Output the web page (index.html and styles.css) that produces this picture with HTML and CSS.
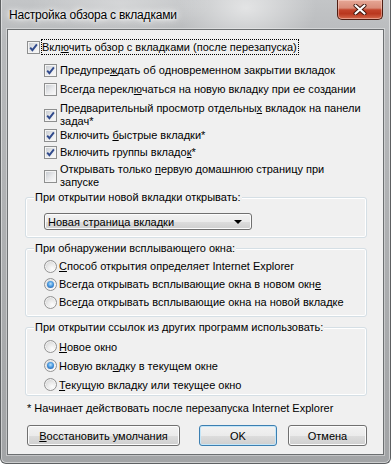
FILE: index.html
```html
<!DOCTYPE html>
<html lang="ru">
<head>
  <meta charset="UTF-8" />
  <title>Настройка обзора с вкладками</title>
  <link rel="stylesheet" href="styles.css">
</head>
<body>
  <div class="window">
    <div class="titlebar">
      <span class="title">Настройка обзора с вкладками</span>
      <span class="close">
        <svg width="14" height="11" viewBox="0 0 14 11">
          <path d="M2.5 1.5 L11.5 9.5 M11.5 1.5 L2.5 9.5" stroke="#3b1209" stroke-width="4" stroke-linecap="round" />
          <path d="M2.5 1.5 L11.5 9.5 M11.5 1.5 L2.5 9.5" stroke="#fff" stroke-width="2.2" stroke-linecap="round" />
        </svg>
      </span>
    </div>

    <div class="client">
      <div class="check main">
        <span class="box checked"></span>
        <span class="focus">Вкл<u>ю</u>чить обзор с вкладками (после перезапуска)</span>
      </div>

      <div class="options">
        <div class="check opt first">
          <span class="box checked"></span>
          <span>Предупре<u>ж</u>дать об одновременном закрытии вкладок</span>
        </div>
        <div class="check opt">
          <span class="box"></span>
          <span>Всегда перекл<u>ю</u>чаться на новую вкладку при ее создании</span>
        </div>
        <div class="check opt">
          <span class="box checked"></span>
          <span>Предварительный просмотр отдельны<u>х</u> вкладок на панели<br>задач*</span>
        </div>
        <div class="check opt after-wrap">
          <span class="box checked"></span>
          <span>Включить <u>б</u>ыстрые вкладки*</span>
        </div>
        <div class="check opt snug">
          <span class="box checked"></span>
          <span>Включить группы вкладо<u>к</u>*</span>
        </div>
        <div class="check opt snug">
          <span class="box"></span>
          <span>Открывать только <u>п</u>ервую домашнюю страницу при<br>запуске</span>
        </div>
      </div>

      <fieldset class="group newtab">
        <legend>При открытии новой вкладки открывать:</legend>
        <div class="combo">
          <span>Новая страница вкладки</span>
          <span class="arrow"></span>
        </div>
      </fieldset>

      <fieldset class="group popup">
        <legend>При обнаружении всплывающего окна:</legend>
        <div class="radio"><span class="dot"></span><span><u>С</u>пособ открытия определяет Internet Explorer</span></div>
        <div class="radio"><span class="dot on"></span><span>Всегда открывать всплывающие окна в новом окн<u>е</u></span></div>
        <div class="radio"><span class="dot"></span><span>Все<u>г</u>да открывать всплывающие окна на новой вкладке</span></div>
      </fieldset>

      <fieldset class="group links">
        <legend>При открытии ссылок из других программ использовать:</legend>
        <div class="radio"><span class="dot"></span><span><u>Н</u>овое окно</span></div>
        <div class="radio"><span class="dot on"></span><span>Новую вкл<u>а</u>дку в текущем окне</span></div>
        <div class="radio"><span class="dot"></span><span><u>Т</u>екущую вкладку или текущее окно</span></div>
      </fieldset>

      <p class="note">* Начинает действовать после перезапуска Internet Explorer</p>

      <div class="buttons">
        <button class="btn restore"><u>В</u>осстановить умолчания</button>
        <button class="btn ok">OK</button>
        <button class="btn cancel">Отмена</button>
      </div>
    </div>
  </div>
</body>
</html>
```

FILE: styles.css
```css
* {
  box-sizing: border-box;
  margin: 0;
  padding: 0;
}

body {
  width: 391px;
  height: 464px;
  overflow: hidden;
  font-family: "Liberation Sans", Arial, sans-serif;
  font-size: 11px;
  color: #000;
  background: #fff;
  white-space: nowrap;
}

u {
  text-decoration: underline;
  text-underline-offset: 1px;
}

/* рамка окна (стекло) */
.window {
  width: 391px;
  height: 464px;
  display: flex;
  flex-direction: column;
  padding: 0 6px 8px;
  border: 1px solid #5d6062;
  border-top: 0;
  border-radius: 0 0 6px 6px;
  background:
    radial-gradient(ellipse 70px 45px at 245px 8px, rgba(255, 255, 255, 0.55), rgba(255, 255, 255, 0)),
    radial-gradient(ellipse 90px 30px at 120px 4px, rgba(255, 255, 255, 0.3), rgba(255, 255, 255, 0)),
    linear-gradient(180deg, #c3c5c7 0, #b8babc 40px, #a2a4a6 100%);
  box-shadow: inset 1px 0 0 rgba(255, 255, 255, 0.45), inset -1px 0 0 rgba(255, 255, 255, 0.45), inset 0 -1px 0 rgba(255, 255, 255, 0.45);
}

.titlebar {
  height: 29px;
  display: flex;
  align-items: flex-start;
}

.title {
  margin: 8px 0 0 2px;
  line-height: 15px;
  font-size: 12px;
  letter-spacing: -0.2px;
  text-shadow: 0 0 6px #fff, 0 0 10px #fff, 0 0 3px #fff;
}

.close {
  margin-left: auto;
  margin-right: 1px;
  width: 46px;
  height: 20px;
  display: flex;
  align-items: center;
  justify-content: center;
  border: 1px solid #4f1d12;
  border-top: 0;
  border-radius: 0 0 5px 5px;
  background: linear-gradient(180deg, #e6a796 0%, #d98c79 42%, #c3442b 52%, #b9371e 72%, #d5694c 100%);
  box-shadow: inset 0 0 0 1px rgba(255, 225, 215, 0.45);
}

/* клиентская область */
.client {
  flex: 1;
  border: 1px solid #6c6f71;
  background: #f0f0f0;
  padding: 9px 0 0 17px;
  box-shadow: 0 0 0 1px rgba(255, 255, 255, 0.35);
}

.check {
  display: flex;
  align-items: center;
  line-height: 13px;
}

.check.main {
  height: 16px;
  margin-left: 2px;
}

.focus {
  margin-left: 1px;
  height: 16px;
  line-height: 14px;
  padding-right: 1px;
  border: 1px dotted #000;
}

.options {
  margin-left: 19px;
}

.opt {
  margin-top: 6px;
}

.opt.first {
  margin-top: 9px;
}

.opt.after-wrap {
  margin-top: 1px;
}

.opt.snug {
  margin-top: 4px;
}

.box {
  flex: none;
  width: 13px;
  height: 13px;
  margin-right: 3px;
  border: 1px solid #8e8f8f;
  padding: 1px;
  background: linear-gradient(135deg, #c9cdd2, #e9eaec 55%, #f8f8f8) content-box, #f4f4f4;
}

.main .box {
  margin-right: 0;
}

.box.checked {
  background:
    url("data:image/svg+xml;utf8,<svg xmlns='http://www.w3.org/2000/svg' width='9' height='9' viewBox='0 0 9 9'><path d='M1.2 4.6 L3.4 7.2 L7.9 1.3' fill='none' stroke='%23304a8c' stroke-width='1.9'/></svg>") center / 9px 9px no-repeat content-box,
    linear-gradient(135deg, #c9cdd2, #e9eaec 55%, #f8f8f8) content-box,
    #f4f4f4;
}

/* группы */
.group {
  width: 342px;
  border: 1px solid #d5dfe5;
  border-radius: 3px;
  padding: 0 0 0 8px;
  box-shadow: inset 0 0 0 1px #fff;
}

.group legend {
  padding: 0 1px;
  line-height: 14px;
  background: #f0f0f0;
}

.newtab {
  margin-top: 1px;
  padding-bottom: 7px;
}

.popup {
  margin-top: 3px;
  padding-top: 2px;
  padding-bottom: 5px;
}

.links {
  margin-top: 3px;
  padding-top: 3px;
  padding-bottom: 1px;
}

.combo {
  margin: 9px 0 0 10px;
  width: 208px;
  height: 17px;
  padding: 0 9px 0 3px;
  display: flex;
  align-items: center;
  justify-content: space-between;
  border: 1px solid #707070;
  border-radius: 3px;
  background: linear-gradient(180deg, #f2f2f2 0%, #ebebeb 50%, #dddddd 51%, #cfcfcf 100%);
  box-shadow: inset 0 0 0 1px #fcfcfc;
}

.arrow {
  width: 0;
  height: 0;
  border-left: 4px solid transparent;
  border-right: 4px solid transparent;
  border-top: 4px solid #000;
}

.radio {
  height: 18px;
  margin-left: 10px;
  display: flex;
  align-items: center;
}

.links .radio {
  height: 19px;
}

.dot {
  flex: none;
  position: relative;
  width: 13px;
  height: 13px;
  margin-right: 2px;
  border-radius: 50%;
  border: 1px solid #939393;
  background: radial-gradient(circle at 65% 70%, #fdfdfd 0, #e8e8e8 45%, #c7c7c7 100%);
  box-shadow: inset 0 0 0 1px rgba(255, 255, 255, 0.6);
}

.dot.on::after {
  content: "";
  position: absolute;
  left: 2px;
  top: 2px;
  width: 7px;
  height: 7px;
  border-radius: 50%;
  background: radial-gradient(circle at 50% 40%, #bfe3fb 0, #4b9be0 45%, #1b4f9e 100%);
}

.note {
  margin: 5px 0 0 2px;
  line-height: 14px;
}

.buttons {
  display: flex;
  margin: 10px 0 0 2px;
}

.btn {
  height: 21px;
  font-family: inherit;
  font-size: 11px;
  color: #000;
  border: 1px solid #707070;
  border-radius: 3px;
  background: linear-gradient(180deg, #f2f2f2 0%, #ebebeb 50%, #dddddd 51%, #cfcfcf 100%);
  box-shadow: inset 0 0 0 1px #fcfcfc;
}

.restore {
  width: 153px;
}

.ok {
  width: 78px;
  margin-left: 19px;
  border-color: #3c7fb1;
  box-shadow: inset 0 0 0 1px #c5e6f8;
}

.cancel {
  width: 79px;
  margin-left: 11px;
}
```
